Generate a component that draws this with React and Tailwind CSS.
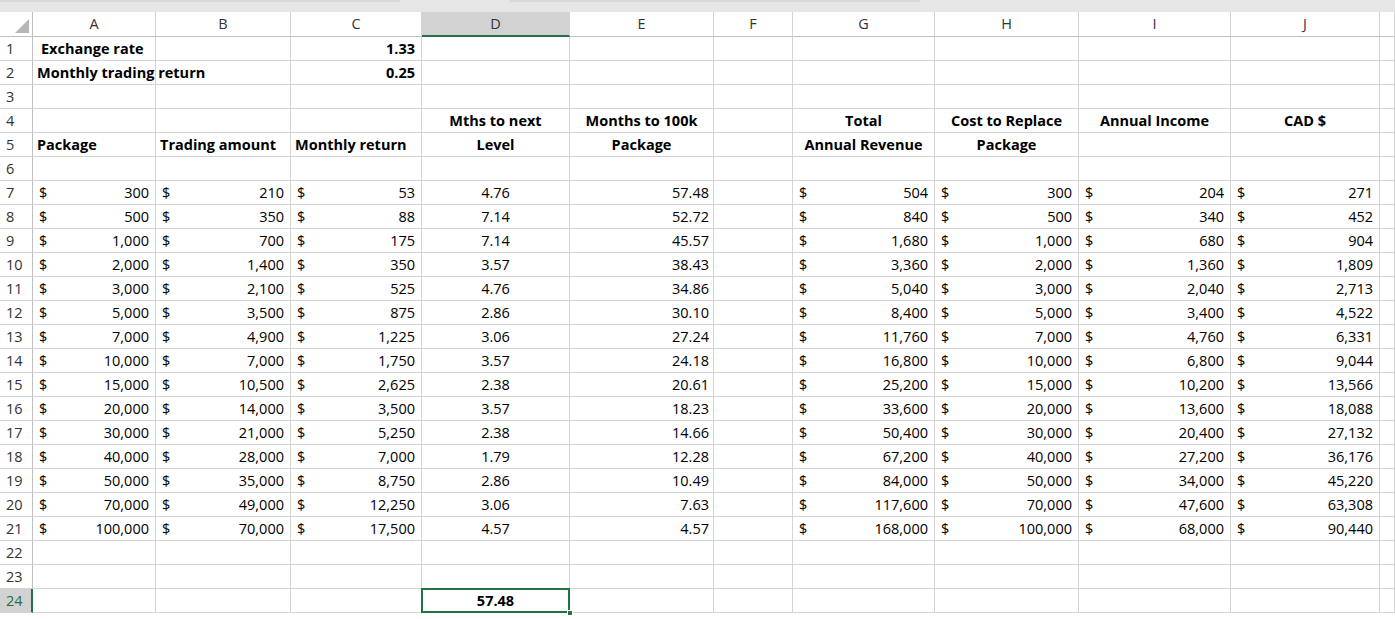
import React from "react";

const cols = ["A","B","C","D","E","F","G","H","I","J",""];
const data = [
 [300,210,53,"4.76","57.48",504,300,204,271],
 [500,350,88,"7.14","52.72",840,500,340,452],
 [1000,700,175,"7.14","45.57",1680,1000,680,904],
 [2000,1400,350,"3.57","38.43",3360,2000,1360,1809],
 [3000,2100,525,"4.76","34.86",5040,3000,2040,2713],
 [5000,3500,875,"2.86","30.10",8400,5000,3400,4522],
 [7000,4900,1225,"3.06","27.24",11760,7000,4760,6331],
 [10000,7000,1750,"3.57","24.18",16800,10000,6800,9044],
 [15000,10500,2625,"2.38","20.61",25200,15000,10200,13566],
 [20000,14000,3500,"3.57","18.23",33600,20000,13600,18088],
 [30000,21000,5250,"2.38","14.66",50400,30000,20400,27132],
 [40000,28000,7000,"1.79","12.28",67200,40000,27200,36176],
 [50000,35000,8750,"2.86","10.49",84000,50000,34000,45220],
 [70000,49000,12250,"3.06","7.63",117600,70000,47600,63308],
 [100000,70000,17500,"4.57","4.57",168000,100000,68000,90440],
];
const fmt = n => n.toLocaleString("en-US");
const Cur = ({v}) => <div className="flex justify-between px-[6px]"><span>$</span><span>{fmt(v)}</span></div>;
const cell = "h-[24px] border-r border-b border-[#d4d4d4] leading-[23px] whitespace-nowrap overflow-visible";

function rowCells(r) {
  const e = Array(11).fill(null);
  if (r === 1) { e[0] = <span className="pl-[8px] font-bold">Exchange rate</span>; e[2] = <div className="text-right pr-[6px] font-bold">1.33</div>; }
  if (r === 2) { e[0] = <span className="pl-[4px] font-bold">Monthly trading return</span>; e[2] = <div className="text-right pr-[6px] font-bold">0.25</div>; }
  if (r === 4) {
    e[3] = <div className="text-center font-bold">Mths to next</div>;
    e[4] = <div className="text-center font-bold">Months to 100k</div>;
    e[6] = <div className="text-center font-bold">Total</div>;
    e[7] = <div className="text-center font-bold">Cost to Replace</div>;
    e[8] = <div className="text-center font-bold">Annual Income</div>;
    e[9] = <div className="text-center font-bold">CAD $</div>;
  }
  if (r === 5) {
    e[0] = <span className="pl-[4px] font-bold">Package</span>;
    e[1] = <span className="pl-[4px] font-bold">Trading amount</span>;
    e[2] = <span className="pl-[4px] font-bold">Monthly return</span>;
    e[3] = <div className="text-center font-bold">Level</div>;
    e[4] = <div className="text-center font-bold">Package</div>;
    e[6] = <div className="text-center font-bold">Annual Revenue</div>;
    e[7] = <div className="text-center font-bold">Package</div>;
  }
  if (r >= 7 && r <= 21) {
    const d = data[r - 7];
    e[0] = <Cur v={d[0]} />; e[1] = <Cur v={d[1]} />; e[2] = <Cur v={d[2]} />;
    e[3] = <div className="text-center">{d[3]}</div>;
    e[4] = <div className="text-right pr-[4px]">{d[4]}</div>;
    e[6] = <Cur v={d[5]} />; e[7] = <Cur v={d[6]} />; e[8] = <Cur v={d[7]} />; e[9] = <Cur v={d[8]} />;
  }
  if (r === 24) e[3] = <div className="text-center font-bold">57.48</div>;
  return e;
}

export default function App() {
  const rows = Array.from({length: 24}, (_, i) => i + 1);
  return (
    <div className="w-[1395px] h-[619px] overflow-hidden bg-white text-[14.5px] text-black" style={{fontFamily: '"Open Sans", sans-serif'}}>
      <div className="h-[12px] bg-[#e6e6e6] flex gap-[10px] items-start">
        <div className="w-[400px] h-[2px] bg-[#d8d8d8]" />
        <div className="w-[410px] h-[2px] bg-[#d8d8d8] ml-[100px]" />
      </div>
      <div className="grid grid-cols-[33px_123px_135px_131px_148px_144px_79px_142px_144px_152px_149px_1fr]">
        <div className="h-[25px] border-r border-b border-[#bfbfbf] bg-white relative">
          <div className="absolute right-[3px] bottom-[3px] w-0 h-0 border-l-[14px] border-l-transparent border-b-[14px] border-b-[#b7b7b7]" />
        </div>
        {cols.map((c, i) => (
          <div key={i} className={`h-[25px] border-r border-[#d4d4d4] text-center leading-[24px] text-[#333] ${c === "D" ? "bg-[#d2d2d2] border-b-2 border-b-[#217346]" : "bg-white border-b border-b-[#bfbfbf]"}`}>{c}</div>
        ))}
        {rows.map(r => {
          const e = rowCells(r);
          return (
            <React.Fragment key={r}>
              <div className={`h-[24px] border-b border-[#d4d4d4] pl-[6px] leading-[23px] ${r === 24 ? "text-[#217346] bg-[#d2d2d2] border-r-2 border-r-[#217346]" : "text-[#333] border-r border-r-[#bfbfbf]"}`}>{r}</div>
              {e.map((x, i) => (
                <div key={i} className={`${cell} ${r === 24 && i === 3 ? "relative" : ""}`}>
                  {x}
                  {r === 24 && i === 3 && (
                    <>
                      <div className="absolute inset-[-1px] border-2 border-[#217346] pointer-events-none" />
                      <div className="absolute right-[-4px] bottom-[-4px] w-[6px] h-[6px] bg-[#217346] border border-white" />
                    </>
                  )}
                </div>
              ))}
            </React.Fragment>
          );
        })}
      </div>
    </div>
  );
}
